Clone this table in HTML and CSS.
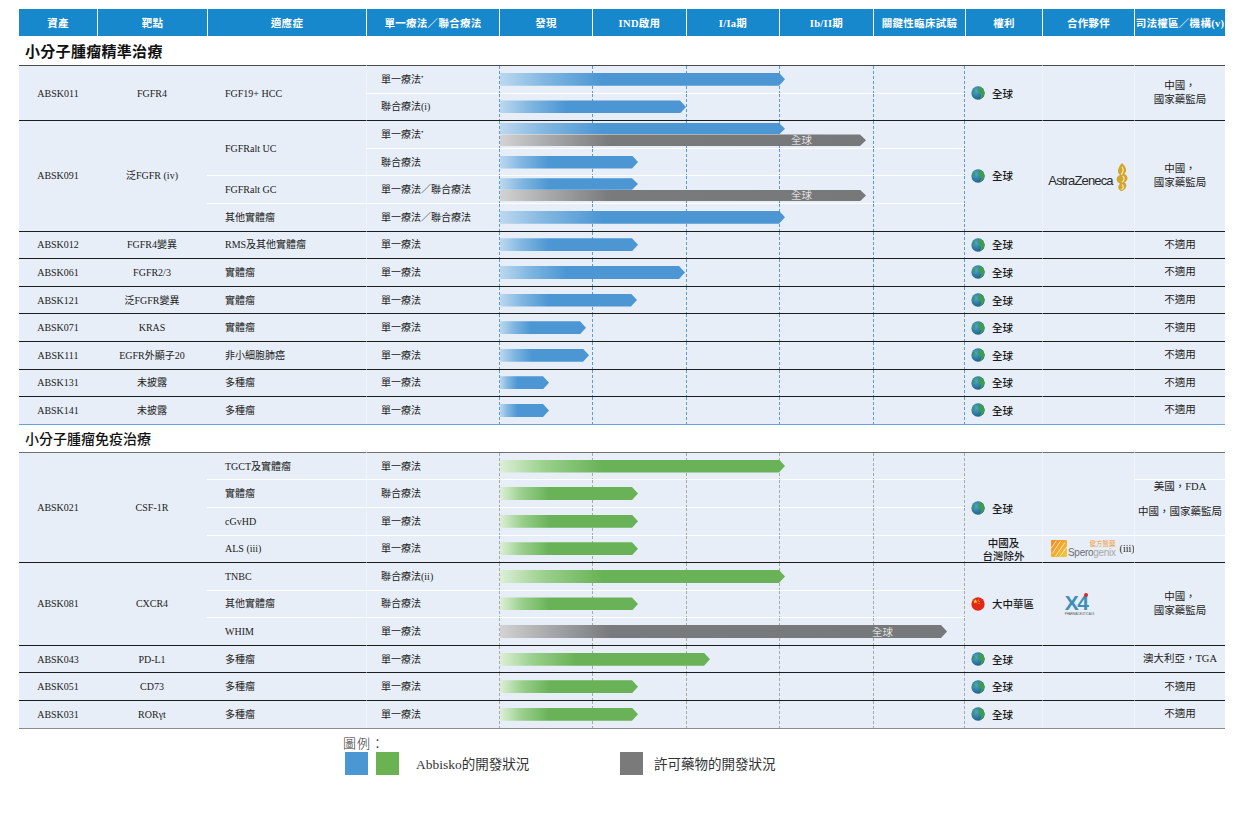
FILE: index.html
```html
<!DOCTYPE html>
<html lang="zh-Hant">
<head>
<meta charset="utf-8">
<title>Pipeline</title>
<link rel="stylesheet" href="styles.css">
</head>
<body>
<svg class="defs" aria-hidden="true" width="0" height="0">
  <defs>
    <radialGradient id="gsea" cx="35%" cy="35%" r="75%">
      <stop offset="0" stop-color="#4fa6cc"/>
      <stop offset="1" stop-color="#175a7d"/>
    </radialGradient>
    <linearGradient id="sgr" x1="0" y1="0" x2="1" y2="1">
      <stop offset="0" stop-color="#ef8a25"/>
      <stop offset="1" stop-color="#f8cb35"/>
    </linearGradient>
  </defs>
  <symbol id="globe" viewBox="0 0 16 16">
    <circle cx="8" cy="8" r="7.6" fill="url(#gsea)"/>
    <path d="M8.6 0.5 C12.4 1 15.2 4 15.6 7.8 C15.3 11.2 13 14 9.6 15.4 C10.6 13 12.2 11.4 11.1 9.3 C10.1 7.7 8.1 8.2 8 6.1 C7.9 4 10 3.2 8.6 0.5 Z" fill="#3f9b52"/>
    <path d="M2.6 4.4 C4.2 3.8 5.4 5.4 4.6 7 C3.8 8.2 2.3 7.8 1.6 6.8 Z" fill="#3f9b52"/>
  </symbol>
  <symbol id="flag" viewBox="0 0 16 16">
    <circle cx="8" cy="8" r="7.6" fill="#e3261a"/>
    <polygon points="5,2.4 5.7,4.3 7.7,4.3 6.1,5.5 6.7,7.4 5,6.3 3.3,7.4 3.9,5.5 2.3,4.3 4.3,4.3" fill="#ffdc1e"/>
    <circle cx="8.6" cy="3.4" r="0.6" fill="#ffdc1e"/>
    <circle cx="9.4" cy="5.2" r="0.6" fill="#ffdc1e"/>
    <circle cx="9.2" cy="7.2" r="0.6" fill="#ffdc1e"/>
  </symbol>
</svg>

<div class="page">
  <div class="table">
    <div class="thead">
      <div class="h">資產</div>
      <div class="h">靶點</div>
      <div class="h">適應症</div>
      <div class="h">單一療法／聯合療法</div>
      <div class="h">發現</div>
      <div class="h">IND啟用</div>
      <div class="h">I/Ia期</div>
      <div class="h">Ib/II期</div>
      <div class="h">關鍵性臨床試驗</div>
      <div class="h">權利</div>
      <div class="h">合作夥伴</div>
      <div class="h">司法權區／機構(v)</div>
    </div>

    <div class="title">小分子腫瘤精準治療</div>

    <div class="sec sec1">
      <!-- ABSK011 -->
      <div class="c g g0 asset r2">ABSK011</div>
      <div class="c g g0 target r2">FGFR4</div>
      <div class="c g g0 ind r2">FGF19+ HCC</div>
      <div class="c g g0 th"><span>單一療法<sup class="ast">•</sup></span></div>
      <div class="c g g0 chart"><div class="bar b" style="width:285px"></div></div>
      <div class="c g g0 rt r2"><svg class="ico"><use href="#globe"/></svg><span>全球</span></div>
      <div class="c g g0 pt r2"></div>
      <div class="c g g0 ju r2"><span>中國，<br>國家藥監局</span></div>
      <div class="c th">聯合療法(i)</div>
      <div class="c chart"><div class="bar b" style="width:186px"></div></div>

      <!-- ABSK091 -->
      <div class="c g asset r4">ABSK091</div>
      <div class="c g target r4">泛FGFR (iv)</div>
      <div class="c g ind r2">FGFRalt UC</div>
      <div class="c g th"><span>單一療法<sup class="ast">•</sup></span></div>
      <div class="c g chart two"><div class="bar b" style="width:285px"></div><div class="bar x" style="width:366px"><span>全球</span></div></div>
      <div class="c g rt r4"><svg class="ico"><use href="#globe"/></svg><span>全球</span></div>
      <div class="c g pt r4">
        <span class="az"><span class="az-t">AstraZeneca</span><svg class="az-m" viewBox="0 0 14 28" width="15" height="30"><path d="M7.5 1 C11 4.5 13 8 9.6 11 C13.6 13 13.6 17.2 9.8 19 C12.8 21 11.8 25.2 7.2 27.4 C3.6 25.6 2.8 22.4 5.6 20.2 C1.4 18.4 1.4 13.8 5.6 12.2 C2.4 9.4 3.6 5 7.5 1 Z" fill="#d2a52c"/><path d="M7.4 4.6 C9.4 7.4 8.6 9.6 6.6 11.6 M8.2 13 C10.2 15 9.6 17.2 7.4 19 M7.6 21 C9.4 22.8 8.8 24.6 6.8 25.8" stroke="#f5e6ad" stroke-width="1.2" fill="none"/></svg></span>
      </div>
      <div class="c g ju r4"><span>中國，<br>國家藥監局</span></div>
      <div class="c th">聯合療法</div>
      <div class="c chart"><div class="bar b" style="width:138px"></div></div>
      <div class="c ind">FGFRalt GC</div>
      <div class="c th">單一療法／聯合療法</div>
      <div class="c chart two"><div class="bar b" style="width:138px"></div><div class="bar x" style="width:366px"><span>全球</span></div></div>
      <div class="c ind">其他實體瘤</div>
      <div class="c th">單一療法／聯合療法</div>
      <div class="c chart"><div class="bar b" style="width:285px"></div></div>

      <!-- ABSK012 -->
      <div class="c g asset">ABSK012</div>
      <div class="c g target">FGFR4變異</div>
      <div class="c g ind">RMS及其他實體瘤</div>
      <div class="c g th">單一療法</div>
      <div class="c g chart"><div class="bar b" style="width:138px"></div></div>
      <div class="c g rt"><svg class="ico"><use href="#globe"/></svg><span>全球</span></div>
      <div class="c g pt"></div>
      <div class="c g ju">不適用</div>

      <!-- ABSK061 -->
      <div class="c g asset">ABSK061</div>
      <div class="c g target">FGFR2/3</div>
      <div class="c g ind">實體瘤</div>
      <div class="c g th">單一療法</div>
      <div class="c g chart"><div class="bar b" style="width:185px"></div></div>
      <div class="c g rt"><svg class="ico"><use href="#globe"/></svg><span>全球</span></div>
      <div class="c g pt"></div>
      <div class="c g ju">不適用</div>

      <!-- ABSK121 -->
      <div class="c g asset">ABSK121</div>
      <div class="c g target">泛FGFR變異</div>
      <div class="c g ind">實體瘤</div>
      <div class="c g th">單一療法</div>
      <div class="c g chart"><div class="bar b" style="width:137px"></div></div>
      <div class="c g rt"><svg class="ico"><use href="#globe"/></svg><span>全球</span></div>
      <div class="c g pt"></div>
      <div class="c g ju">不適用</div>

      <!-- ABSK071 -->
      <div class="c g asset">ABSK071</div>
      <div class="c g target">KRAS</div>
      <div class="c g ind">實體瘤</div>
      <div class="c g th">單一療法</div>
      <div class="c g chart"><div class="bar b" style="width:86px"></div></div>
      <div class="c g rt"><svg class="ico"><use href="#globe"/></svg><span>全球</span></div>
      <div class="c g pt"></div>
      <div class="c g ju">不適用</div>

      <!-- ABSK111 -->
      <div class="c g asset">ABSK111</div>
      <div class="c g target">EGFR外顯子20</div>
      <div class="c g ind">非小細胞肺癌</div>
      <div class="c g th">單一療法</div>
      <div class="c g chart"><div class="bar b" style="width:89px"></div></div>
      <div class="c g rt"><svg class="ico"><use href="#globe"/></svg><span>全球</span></div>
      <div class="c g pt"></div>
      <div class="c g ju">不適用</div>

      <!-- ABSK131 -->
      <div class="c g asset">ABSK131</div>
      <div class="c g target">未披露</div>
      <div class="c g ind">多種瘤</div>
      <div class="c g th">單一療法</div>
      <div class="c g chart"><div class="bar b" style="width:49px"></div></div>
      <div class="c g rt"><svg class="ico"><use href="#globe"/></svg><span>全球</span></div>
      <div class="c g pt"></div>
      <div class="c g ju">不適用</div>

      <!-- ABSK141 -->
      <div class="c g asset">ABSK141</div>
      <div class="c g target">未披露</div>
      <div class="c g ind">多種瘤</div>
      <div class="c g th">單一療法</div>
      <div class="c g chart"><div class="bar b" style="width:49px"></div></div>
      <div class="c g rt"><svg class="ico"><use href="#globe"/></svg><span>全球</span></div>
      <div class="c g pt"></div>
      <div class="c g ju">不適用</div>
    </div>

    <div class="title t2">小分子腫瘤免疫治療</div>

    <div class="sec sec2">
      <!-- ABSK021 -->
      <div class="c g g0 asset r4">ABSK021</div>
      <div class="c g g0 target r4">CSF-1R</div>
      <div class="c g g0 ind">TGCT及實體瘤</div>
      <div class="c g g0 th">單一療法</div>
      <div class="c g g0 chart"><div class="bar gr" style="width:285px"></div></div>
      <div class="c g g0 rt r3 low"><svg class="ico"><use href="#globe"/></svg><span>全球</span></div>
      <div class="c g g0 pt r3"></div>
      <div class="c g g0 ju"></div>
      <div class="c ind">實體瘤</div>
      <div class="c th">聯合療法</div>
      <div class="c chart"><div class="bar gr" style="width:138px"></div></div>
      <div class="c ju r2 stack"><span>美國，FDA</span><span>中國，國家藥監局</span></div>
      <div class="c ind">cGvHD</div>
      <div class="c th">單一療法</div>
      <div class="c chart"><div class="bar gr" style="width:138px"></div></div>
      <div class="c ind">ALS (iii)</div>
      <div class="c th">單一療法</div>
      <div class="c chart"><div class="bar gr" style="width:138px"></div></div>
      <div class="c rt ctr"><span>中國及<br>台灣除外</span></div>
      <div class="c pt left">
        <span class="spero">
          <svg class="spero-m" viewBox="0 0 15 16" width="16" height="17"><rect width="15" height="16" rx="1" fill="url(#sgr)"/><path d="M1 13 L9 1 M4 15.5 L13 2.5 M8 16 L15 6.5 M0 8 L5 0.5" stroke="#fff" stroke-width="0.9" opacity="0.75"/></svg>
          <span class="spero-t"><span class="spero-cn">健方醫藥</span><span class="spero-en">Spero<span class="lt">genix</span></span></span>
        </span>
        <span class="iii">(iii)</span>
      </div>
      <div class="c ju"></div>

      <!-- ABSK081 -->
      <div class="c g asset r3">ABSK081</div>
      <div class="c g target r3">CXCR4</div>
      <div class="c g ind">TNBC</div>
      <div class="c g th">聯合療法(ii)</div>
      <div class="c g chart"><div class="bar gr" style="width:285px"></div></div>
      <div class="c g rt r3"><svg class="ico"><use href="#flag"/></svg><span>大中華區</span></div>
      <div class="c g pt r3 x4c"><span class="x4"><span class="x4t">X4</span><span class="x4s">PHARMACEUTICALS</span></span></div>
      <div class="c g ju r3"><span>中國，<br>國家藥監局</span></div>
      <div class="c ind">其他實體瘤</div>
      <div class="c th">聯合療法</div>
      <div class="c chart"><div class="bar gr" style="width:138px"></div></div>
      <div class="c ind">WHIM</div>
      <div class="c th">單一療法</div>
      <div class="c chart"><div class="bar x" style="width:447px"><span>全球</span></div></div>

      <!-- ABSK043 -->
      <div class="c g asset">ABSK043</div>
      <div class="c g target">PD-L1</div>
      <div class="c g ind">多種瘤</div>
      <div class="c g th">單一療法</div>
      <div class="c g chart"><div class="bar gr" style="width:210px"></div></div>
      <div class="c g rt"><svg class="ico"><use href="#globe"/></svg><span>全球</span></div>
      <div class="c g pt"></div>
      <div class="c g ju">澳大利亞，TGA</div>

      <!-- ABSK051 -->
      <div class="c g asset">ABSK051</div>
      <div class="c g target">CD73</div>
      <div class="c g ind">多種瘤</div>
      <div class="c g th">單一療法</div>
      <div class="c g chart"><div class="bar gr" style="width:138px"></div></div>
      <div class="c g rt"><svg class="ico"><use href="#globe"/></svg><span>全球</span></div>
      <div class="c g pt"></div>
      <div class="c g ju">不適用</div>

      <!-- ABSK031 -->
      <div class="c g asset">ABSK031</div>
      <div class="c g target">RORγt</div>
      <div class="c g ind">多種瘤</div>
      <div class="c g th">單一療法</div>
      <div class="c g chart"><div class="bar gr" style="width:138px"></div></div>
      <div class="c g rt"><svg class="ico"><use href="#globe"/></svg><span>全球</span></div>
      <div class="c g pt"></div>
      <div class="c g ju">不適用</div>
    </div>
  </div>

  <div class="legend">
    <div class="lg-title">圖例：</div>
    <div class="lg-row">
      <span class="sq sq-b"></span>
      <span class="sq sq-g"></span>
      <span class="lg-text lg-first">Abbisko的開發狀況</span>
      <span class="sq sq-x"></span>
      <span class="lg-text lg-second">許可藥物的開發狀況</span>
    </div>
  </div>
</div>
</body>
</html>
```

FILE: styles.css
```css
* { box-sizing: border-box; }

html, body {
  margin: 0;
  background: #ffffff;
}

body {
  font-family: "Liberation Serif", "Noto Sans CJK TC", serif;
  font-size: 10px;
  color: #222222;
}

.defs {
  position: absolute;
  width: 0;
  height: 0;
  overflow: hidden;
}

.page {
  padding: 9px 0 0 19px;
}

.table {
  width: 1206px;
}

.thead,
.sec {
  display: grid;
  grid-template-columns: 78px 110px 159px 133px 93px 94px 93px 94px 92px 77px 92px 91px;
}

/* header */
.thead {
  height: 27px;
  background: #1788cc;
  color: #ffffff;
}

.h {
  display: flex;
  align-items: center;
  justify-content: center;
  border-left: 1px solid #ffffff;
  font-size: 10.5px;
  font-weight: 700;
  letter-spacing: 0.3px;
  white-space: nowrap;
}

.h:first-child {
  border-left: 0;
}

/* section titles */
.title {
  height: 29px;
  display: flex;
  align-items: center;
  padding-left: 6px;
  font-family: "Noto Sans CJK TC", sans-serif;
  font-size: 15px;
  font-weight: 700;
  color: #111111;
  letter-spacing: 0.3px;
}

.title.t2 {
  height: 27px;
  font-size: 14px;
  font-weight: 500;
  letter-spacing: 0;
}

/* body grid */
.sec {
  grid-auto-rows: 27.6px;
  background: #e7eef7;
}

.sec1 { border-bottom: 1px solid #6ba3d6; }
.sec2 { border-bottom: 1px solid #8a8a8a; }

.c {
  display: flex;
  align-items: center;
  min-width: 0;
  border-top: 1px solid #ffffff;
  white-space: nowrap;
  line-height: 13px;
}

.g { border-top-color: #1c1c1c; }
.sec1 .g0 { border-top-color: #4a4a4a; }
.sec2 .g0 { border-top-color: #707070; }

.r2 { grid-row: span 2; }
.r3 { grid-row: span 3; }
.r4 { grid-row: span 4; }

.asset,
.target {
  justify-content: center;
}

.ind {
  padding-left: 18px;
}

.th {
  padding-left: 14px;
  border-left: 1px solid #f0f4fa;
}

.ast {
  font-size: 7px;
  vertical-align: 4px;
  line-height: 0;
}

/* chart area */
.chart {
  --d: #5c9ad2;
  grid-column: span 5;
  flex-direction: column;
  align-items: flex-start;
  justify-content: center;
  padding-left: 1px;
  background-image:
    linear-gradient(var(--d) 60%, transparent 60%),
    linear-gradient(var(--d) 60%, transparent 60%),
    linear-gradient(var(--d) 60%, transparent 60%),
    linear-gradient(var(--d) 60%, transparent 60%),
    linear-gradient(var(--d) 60%, transparent 60%),
    linear-gradient(var(--d) 60%, transparent 60%);
  background-size: 1px 5px;
  background-repeat: repeat-y;
  background-position: 0 0, 93px 0, 187px 0, 280px 0, 374px 0, 465px 0;
}

.sec2 .chart {
  --d: #a9a9a9;
}

.bar {
  height: 13px;
  flex: none;
  clip-path: polygon(0 0, calc(100% - 6px) 0, 100% 50%, calc(100% - 6px) 100%, 0 100%);
}

.two .bar {
  height: 11.5px;
}

.bar.b {
  background: linear-gradient(90deg, #bcd8ef 0%, #80b6e1 16%, #4b96d3 36%, #4b96d3 100%);
}

.bar.gr {
  background: linear-gradient(90deg, #dcefd6 0%, #99cf8b 16%, #69b257 36%, #69b257 100%);
}

.bar.x {
  display: flex;
  align-items: center;
  justify-content: flex-end;
  padding-right: 54px;
  background: linear-gradient(90deg, #d3d3d3 0px, #a7a8a9 50px, #787a7c 110px, #76787a 100%);
}

.bar.x span {
  color: #ffffff;
  font-family: "Noto Sans CJK TC", sans-serif;
  font-size: 10.5px;
  font-weight: 300;
  line-height: 10px;
}

/* rights */
.rt {
  padding-left: 6px;
  gap: 7px;
  font-family: "Noto Sans CJK TC", sans-serif;
  font-size: 10.5px;
  font-weight: 500;
  color: #1a1a1a;
}

.rt.low {
  padding-top: 29px;
}

.rt.ctr {
  justify-content: center;
  text-align: center;
  padding-left: 0;
  line-height: 13px;
}

.ico {
  width: 14px;
  height: 14px;
  flex: none;
}

/* partner */
.pt {
  justify-content: center;
  border-left: 1px solid #f0f4fa;
}

.pt.left {
  justify-content: flex-start;
  padding-left: 8px;
  gap: 4px;
}

.az {
  display: flex;
  align-items: flex-end;
}

.az-t {
  font-family: "Liberation Sans", sans-serif;
  font-size: 13px;
  letter-spacing: -0.85px;
  color: #2a2a2a;
  line-height: 14px;
  padding-bottom: 1px;
}

.az-m {
  margin-left: 1px;
  margin-bottom: -3px;
}

.spero {
  display: flex;
  align-items: center;
  gap: 1px;
}

.spero-t {
  display: flex;
  flex-direction: column;
  align-items: flex-end;
  line-height: 1;
}

.spero-cn {
  font-family: "Noto Sans CJK TC", sans-serif;
  font-size: 6.5px;
  color: #f19a3a;
  margin-bottom: 1px;
}

.spero-en {
  font-family: "Liberation Sans", sans-serif;
  font-size: 10px;
  color: #6d6d6d;
  letter-spacing: -0.3px;
}

.spero-en .lt {
  color: #a8a8a8;
}

.iii {
  font-size: 10px;
}

.x4c {
  padding-right: 18px;
}

.x4 {
  position: relative;
  display: flex;
  flex-direction: column;
  align-items: flex-start;
  line-height: 1;
}

.x4t {
  font-family: "Liberation Sans", sans-serif;
  font-weight: 700;
  font-size: 21px;
  letter-spacing: -1.5px;
  color: #3e8fb8;
}

.x4s {
  font-family: "Liberation Sans", sans-serif;
  font-size: 3px;
  color: #555555;
}

.x4::after {
  content: "";
  position: absolute;
  left: 19px;
  top: 1px;
  width: 4px;
  height: 4px;
  border-radius: 50%;
  background: #d8262b;
}

/* jurisdiction */
.ju {
  justify-content: center;
  text-align: center;
  border-left: 1px solid #f0f4fa;
  font-size: 10.5px;
  line-height: 14px;
}

.ju.stack {
  flex-direction: column;
  justify-content: flex-start;
  gap: 11px;
}

/* legend */
.legend {
  padding-left: 324px;
  margin-top: 7px;
  color: #333333;
}

.lg-title {
  font-size: 13px;
  line-height: 16px;
  font-weight: 300;
  letter-spacing: 1px;
}

.lg-row {
  display: flex;
  align-items: center;
  height: 23px;
  margin-top: 0;
}

.sq {
  width: 23px;
  height: 23px;
  flex: none;
}

.sq-b {
  background: #4b97d3;
  margin-left: 2px;
}

.sq-g {
  background: #6ab252;
  margin-left: 8px;
}

.sq-x {
  background: #7a7a7a;
}

.lg-text {
  font-size: 13.5px;
}

.lg-first {
  margin-left: 17px;
  width: 204px;
}

.lg-second {
  margin-left: 11px;
}
```
